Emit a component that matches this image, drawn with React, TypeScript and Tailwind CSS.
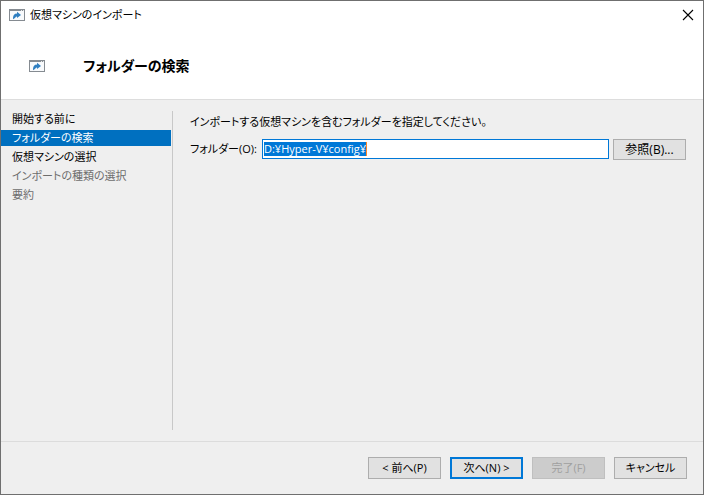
import type { ReactNode } from "react";

function ImportIcon() {
  return (
    <svg width="16" height="12" viewBox="0 0 16 12" aria-hidden="true" className="shrink-0">
      <rect x="0" y="0" width="16" height="12" fill="#858b91" />
      <rect x="1" y="2" width="14" height="9" fill="#f8fafc" />
      <rect x="12" y="1" width="1" height="1" fill="#e5e8ea" />
      <rect x="14" y="1" width="1" height="1" fill="#e5e8ea" />
      <path d="M4 10.200C4 6 5.500 4.800 8 4.600V2.800L12 6L8 9V7.600C6.500 7.600 6 9.800 4 10.200Z" fill="#2f7fc1" />
    </svg>
  );
}

const steps = [
  { label: "開始する前に", state: "open" },
  { label: "フォルダーの検索", state: "current" },
  { label: "仮想マシンの選択", state: "open" },
  { label: "インポートの種類の選択", state: "locked" },
  { label: "要約", state: "locked" },
];

const stepStyles: Record<string, string> = {
  open: "text-black",
  current: "bg-[#0070c0] text-white",
  locked: "text-[#6d6d6d]",
};

function FooterButton({
  children,
  primary = false,
  disabled = false,
}: {
  children: ReactNode;
  primary?: boolean;
  disabled?: boolean;
}) {
  const look = primary
    ? "border-2 border-[#0078d7] bg-[#e1e1e1]"
    : disabled
      ? "border border-[#bfbfbf] bg-[#cccccc] text-[#a0a0a0]"
      : "border border-[#adadad] bg-[#e1e1e1]";
  return (
    <button
      type="button"
      disabled={disabled}
      className={`flex h-[22px] w-[73px] items-center justify-center whitespace-nowrap ${look}`}
    >
      {children}
    </button>
  );
}

export default function App() {
  return (
    <main className="flex h-screen flex-col border border-[#6f6f6f] bg-[#efefef] font-['Open_Sans','Noto_Sans_CJK_JP',sans-serif] text-[11px] leading-[16px] text-black [font-feature-settings:'palt']">
      <header className="h-[99px] shrink-0 border-b border-[#dddddd] bg-white">
        <div className="flex h-7 items-center justify-between pr-[9px] pl-2">
          <div className="flex items-center gap-[5px]">
            <ImportIcon />
            <span>仮想マシンのインポート</span>
          </div>
          <button type="button" aria-label="閉じる" className="flex h-6 w-3 items-center justify-center">
            <svg width="12" height="12" viewBox="0 0 12 12" stroke="#000" strokeWidth="1.100">
              <path d="M1 1L11 11M11 1L1 11" />
            </svg>
          </button>
        </div>
        <div className="flex items-center gap-[38px] pt-7 pl-7">
          <ImportIcon />
          <h1 className="text-[14px] leading-[18px] font-bold">フォルダーの検索</h1>
        </div>
      </header>

      <div className="flex min-h-0 flex-1 pt-[11px] pb-[11px]">
        <nav className="w-[172px] shrink-0 border-r border-[#c8c8c8]">
          <ol className="flex flex-col gap-[3px]">
            {steps.map((s) => (
              <li
                key={s.label}
                aria-current={s.state === "current" ? "step" : undefined}
                className={`mr-px pl-[11px] ${stepStyles[s.state]}`}
              >
                {s.label}
              </li>
            ))}
          </ol>
        </nav>

        <section className="min-w-0 flex-1 pt-[3px] pr-[17px] pl-[17px]">
          <p>インポートする仮想マシンを含むフォルダーを指定してください。</p>
          <div className="mt-[9px] flex items-start">
            <label htmlFor="folder" className="w-[72px] shrink-0 leading-5 whitespace-nowrap">
              フォルダー(O):
            </label>
            <div className="flex h-5 min-w-0 flex-1 items-center border border-[#0078d7] bg-white pl-px">
              <input
                id="folder"
                type="text"
                defaultValue="D:¥Hyper-V¥config¥"
                className="field-sizing-content h-[14px] bg-[#0078d7] leading-[14px] text-white outline-none"
              />
              <span aria-hidden="true" className="h-[14px] w-px bg-[#ff8728]" />
            </div>
            <button
              type="button"
              className="ml-1 h-[21px] w-[73px] shrink-0 border border-[#adadad] bg-[#e1e1e1] text-[12px] leading-[18px]"
            >
              参照(B)...
            </button>
          </div>
        </section>
      </div>

      <footer className="flex h-[53px] shrink-0 justify-end gap-[9px] border-t border-[#dcdcdc] pt-[15px] pr-4">
        <FooterButton>&lt; 前へ(P)</FooterButton>
        <FooterButton primary>次へ(N) &gt;</FooterButton>
        <FooterButton disabled>完了(F)</FooterButton>
        <FooterButton>キャンセル</FooterButton>
      </footer>
    </main>
  );
}
